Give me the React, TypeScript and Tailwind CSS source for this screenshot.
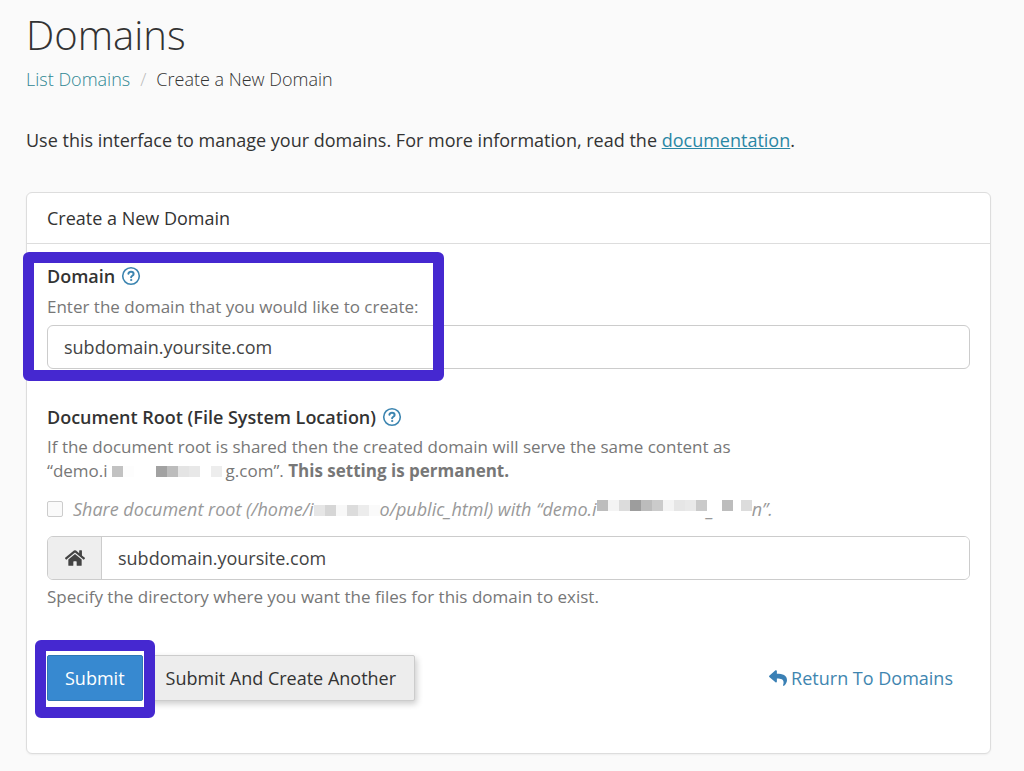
import React from 'react'
import { FaHome, FaReply } from 'react-icons/fa'

const rootMask = ['bg-[#c2c2c2]', 'bg-[#fdfdfd]', 'bg-white', 'bg-white', 'bg-[#a2a2a2]', 'bg-[#bcbcbc]', 'bg-[#e4e4e4]', 'bg-[#e8e8e8]', 'bg-white', 'bg-[#ededed]']
const homeMask = ['bg-[#e6e6e6]', 'bg-[#d6d6d6]', 'bg-[#f8f8f8]', 'bg-[#dcdcdc]', 'bg-[#ececec]', 'bg-[#fafafa]']
const demoMask = ['bg-[#bdbdbd]', 'bg-[#f4f4f4]', 'bg-[#dcdcdc]', 'bg-[#9d9d9d]', 'bg-[#bcbcbc]', 'bg-[#cbcbcb]', 'bg-[#f4f4f4]', 'bg-[#e6e6e6]', 'bg-[#e9e9e9]', 'bg-[#cacaca]']

const Mask = ({ cells, raised }: { cells: string[]; raised?: boolean }) => (
  <span className={raised ? 'inline-flex align-[5px] leading-none' : 'inline-flex'} aria-hidden="true">
    {cells.map((cell, i) => (
      <span key={i} className={`h-[11px] w-[11px] ${cell}`} />
    ))}
  </span>
)

const HelpButton = ({ label }: { label: string }) => (
  <button type="button" aria-label={label} className="text-[#3c85b0]">
    <svg viewBox="0 0 20 20" className="h-5 w-5" fill="none" stroke="currentColor" strokeLinecap="round">
      <circle cx="10" cy="10" r="8.3" strokeWidth="1.6" />
      <path d="M7.4 7.7c.3-1.3 1.3-2 2.6-2 1.5 0 2.6.9 2.6 2.2 0 1.8-2.5 1.8-2.5 3.4" strokeWidth="2" />
      <circle cx="10.1" cy="14" r=".6" fill="currentColor" strokeWidth="1" />
    </svg>
  </button>
)

const App = () => {
  return (
    <main className="min-h-screen bg-[#fafafa] pt-[11px] pr-[33px] pb-4 pl-[26px] font-['Open_Sans',sans-serif] text-lg text-[#333]">
      <h1 className="text-[40px] leading-12 font-light">Domains</h1>
      <nav aria-label="Breadcrumb" className="mt-2 flex leading-6 font-light">
        <a href="#list" className="text-[#2f8793]">List Domains</a>
        <span className="mx-2.5 text-[#bbb]">/</span>
        <span>Create a New Domain</span>
      </nav>
      <p className="mt-[37px] leading-6">
        Use this interface to manage your domains. For more information, read the{' '}
        <a href="#documentation" className="text-[#2a87a5] underline">documentation</a>.
      </p>

      <section className="mt-10 rounded-md border border-[#ddd] bg-white shadow-xs">
        <h2 className="border-b border-[#ddd] px-5 py-[13px] leading-6">Create a New Domain</h2>
        <form className="px-5 pt-5 pb-[52px]">
          <div className="relative">
            <div className="flex items-center gap-1.5 leading-6">
              <label htmlFor="domain" className="font-semibold">Domain</label>
              <HelpButton label="About the domain" />
            </div>
            <p className="mt-[7px] text-[17px] leading-6 text-[#777]">Enter the domain that you would like to create:</p>
            <input
              id="domain"
              type="text"
              defaultValue="subdomain.yoursite.com"
              className="mt-1.5 h-11 w-full rounded-md border border-[#ccc] bg-white px-4 text-[#444]"
            />
            <div className="pointer-events-none absolute -top-3 -bottom-3 -left-6 w-[421px] rounded-md border-[11px] border-[#4528d0]" />
          </div>

          <div className="mt-9 flex items-center gap-1.5 leading-6">
            <label htmlFor="root" className="font-semibold">Document Root (File System Location)</label>
            <HelpButton label="About the document root" />
          </div>
          <p className="mt-1.5 text-[17px] leading-6 text-[#777]">
            If the document root is shared then the created domain will serve the same content as
            <br />
            “demo.i<span className="mr-1 ml-1"><Mask cells={rootMask} /></span>g.com”. <strong>This setting is permanent.</strong>
          </p>
          <div className="mt-3.5 flex items-center gap-2.5 leading-6 text-[#999] italic">
            <input id="share" type="checkbox" disabled className="h-4 w-4 appearance-none rounded-xs border border-[#ccc] bg-[#fafafa]" />
            <label htmlFor="share">
              Share document root (/home/i<Mask cells={homeMask} />o/public_html) with “demo.i<Mask cells={demoMask} raised />_
              <span className="mx-2"><Mask cells={['bg-[#bdbdbd]']} raised /></span>
              <Mask cells={['bg-[#dcdcdc]']} raised />n”.
            </label>
          </div>
          <div className="mt-[15px] flex h-11 overflow-hidden rounded-md border border-[#ccc]">
            <span className="flex w-[54px] items-center justify-center border-r border-[#ccc] bg-[#eee]">
              <FaHome className="h-5 w-5 text-[#444]" />
            </span>
            <input id="root" type="text" defaultValue="subdomain.yoursite.com" className="min-w-0 flex-1 bg-white px-4 text-[#444]" />
          </div>
          <p className="mt-[5px] text-[17px] leading-6 text-[#777]">Specify the directory where you want the files for this domain to exist.</p>

          <div className="mt-[46px] flex items-center">
            <div className="relative">
              <button type="submit" className="h-[46px] rounded-xs border border-[#2f77b3] bg-[#3789d0] px-[17px] text-white">Submit</button>
              <div className="pointer-events-none absolute -inset-x-3 -top-[15px] -bottom-[17px] z-10 rounded-md border-[11px] border-[#4528d0]" />
            </div>
            <button type="button" className="ml-1 h-[46px] rounded-xs border border-[#ccc] bg-[#ededed] px-[18px] shadow-[2px_3px_6px_rgba(0,0,0,0.2)]">Submit And Create Another</button>
            <a href="#list" className="mr-[17px] ml-auto flex items-center gap-1 text-[#3f86b0]">
              <FaReply className="h-[18px] w-[18px] text-[#3a80b5]" />
              Return To Domains
            </a>
          </div>
        </form>
      </section>
    </main>
  )
}

export default App
